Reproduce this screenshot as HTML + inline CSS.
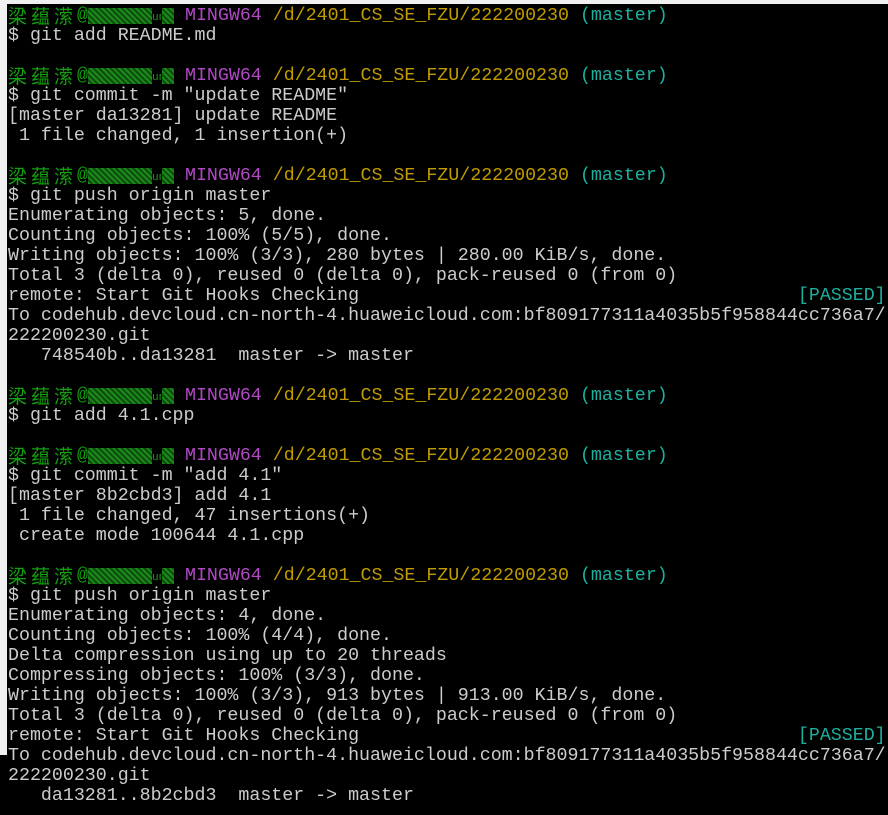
<!DOCTYPE html>
<html><head><meta charset="utf-8"><style>
html,body{margin:0;padding:0;background:#000;width:888px;height:815px;overflow:hidden;position:relative}
.top{position:absolute;left:0;top:0;width:888px;height:4px;background:#f0f0f0}
.left{position:absolute;left:0;top:0;width:7px;height:755px;background:#f0f0f0}
.t0{position:absolute;left:8px;top:6px;font-family:"Liberation Mono",monospace;font-size:18.3px;color:#cccccc}
.t0 div{height:20px;line-height:20px;white-space:pre;overflow:visible}
.g{color:#13a10e}.m{color:#b148c6}.y{color:#c19c00}.t{color:#1cb0a0}
.cj{display:inline-block;width:69px;height:20px;line-height:20px;overflow:hidden;font-family:"Noto Sans CJK SC",sans-serif;font-size:19px;letter-spacing:4px;color:#13a10e;vertical-align:top}
.blk{display:inline-block;width:64px;height:16px;margin-top:2px;vertical-align:top;background:repeating-linear-gradient(45deg,#1b8a1b 0 2px,#0d4d0d 2px 4px)}
.blk2{display:inline-block;width:12px;height:16px;margin-top:2px;vertical-align:top;background:repeating-linear-gradient(45deg,#1b8a1b 0 2px,#0d4d0d 2px 4px)}
.un{display:inline-block;width:10px;height:16px;line-height:16px;font-size:11px;color:#13a10e;vertical-align:top;margin-top:4px;overflow:hidden}
</style></head><body>
<div class="top"></div><div class="left"></div>
<div class="t0">
<div><span class="cj">梁蕴潆</span><span class="g">@</span><span class="blk"></span><span class="un">un</span><span class="blk2"></span> <span class="m">MINGW64</span> <span class="y">/d/2401_CS_SE_FZU/222200230</span> <span class="t">(master)</span></div>
<div>$ git add README.md</div>
<div></div>
<div><span class="cj">梁蕴潆</span><span class="g">@</span><span class="blk"></span><span class="un">un</span><span class="blk2"></span> <span class="m">MINGW64</span> <span class="y">/d/2401_CS_SE_FZU/222200230</span> <span class="t">(master)</span></div>
<div>$ git commit -m "update README"</div>
<div>[master da13281] update README</div>
<div> 1 file changed, 1 insertion(+)</div>
<div></div>
<div><span class="cj">梁蕴潆</span><span class="g">@</span><span class="blk"></span><span class="un">un</span><span class="blk2"></span> <span class="m">MINGW64</span> <span class="y">/d/2401_CS_SE_FZU/222200230</span> <span class="t">(master)</span></div>
<div>$ git push origin master</div>
<div>Enumerating objects: 5, done.</div>
<div>Counting objects: 100% (5/5), done.</div>
<div>Writing objects: 100% (3/3), 280 bytes | 280.00 KiB/s, done.</div>
<div>Total 3 (delta 0), reused 0 (delta 0), pack-reused 0 (from 0)</div>
<div>remote: Start Git Hooks Checking                                        <span class="t">[PASSED]</span></div>
<div>To codehub.devcloud.cn-north-4.huaweicloud.com:bf809177311a4035b5f958844cc736a7/</div>
<div>222200230.git</div>
<div>   748540b..da13281  master -&gt; master</div>
<div></div>
<div><span class="cj">梁蕴潆</span><span class="g">@</span><span class="blk"></span><span class="un">un</span><span class="blk2"></span> <span class="m">MINGW64</span> <span class="y">/d/2401_CS_SE_FZU/222200230</span> <span class="t">(master)</span></div>
<div>$ git add 4.1.cpp</div>
<div></div>
<div><span class="cj">梁蕴潆</span><span class="g">@</span><span class="blk"></span><span class="un">un</span><span class="blk2"></span> <span class="m">MINGW64</span> <span class="y">/d/2401_CS_SE_FZU/222200230</span> <span class="t">(master)</span></div>
<div>$ git commit -m "add 4.1"</div>
<div>[master 8b2cbd3] add 4.1</div>
<div> 1 file changed, 47 insertions(+)</div>
<div> create mode 100644 4.1.cpp</div>
<div></div>
<div><span class="cj">梁蕴潆</span><span class="g">@</span><span class="blk"></span><span class="un">un</span><span class="blk2"></span> <span class="m">MINGW64</span> <span class="y">/d/2401_CS_SE_FZU/222200230</span> <span class="t">(master)</span></div>
<div>$ git push origin master</div>
<div>Enumerating objects: 4, done.</div>
<div>Counting objects: 100% (4/4), done.</div>
<div>Delta compression using up to 20 threads</div>
<div>Compressing objects: 100% (3/3), done.</div>
<div>Writing objects: 100% (3/3), 913 bytes | 913.00 KiB/s, done.</div>
<div>Total 3 (delta 0), reused 0 (delta 0), pack-reused 0 (from 0)</div>
<div>remote: Start Git Hooks Checking                                        <span class="t">[PASSED]</span></div>
<div>To codehub.devcloud.cn-north-4.huaweicloud.com:bf809177311a4035b5f958844cc736a7/</div>
<div>222200230.git</div>
<div>   da13281..8b2cbd3  master -&gt; master</div>
</div>
</body></html>
